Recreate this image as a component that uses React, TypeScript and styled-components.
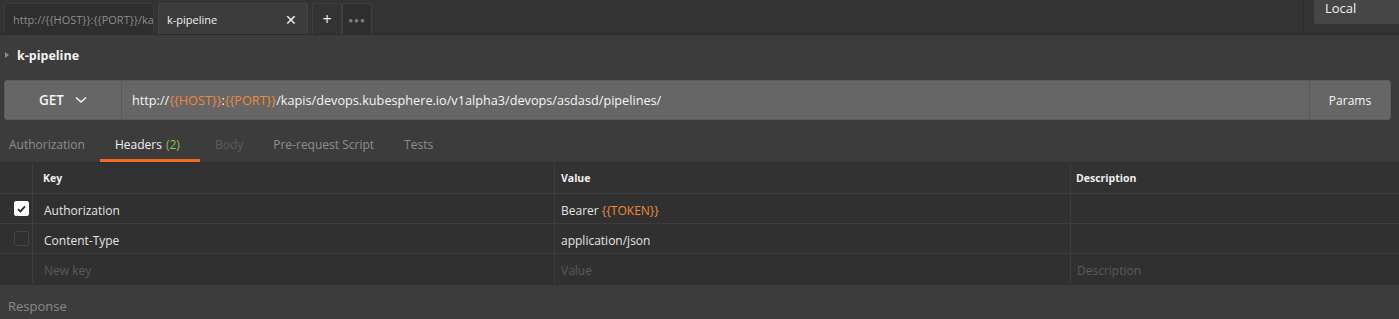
import React from 'react';
import styled, { createGlobalStyle } from 'styled-components';

const GlobalStyle = createGlobalStyle`
  html, body {
    margin: 0;
    padding: 0;
    background: #3c3c3c;
    font-family: 'Open Sans', 'Noto Sans', sans-serif;
    -webkit-font-smoothing: antialiased;
  }
`;

const Page = styled.div`
  width: 1399px;
  height: 319px;
  overflow: hidden;
  background: #3c3c3c;
  color: #e6e6e6;
  font-size: 12px;
`;

// top tabs bar
const TabBar = styled.div`
  display: flex;
  align-items: flex-end;
  height: 34px;
  background: #333333;
  border-bottom: 1px solid #2b2b2b;
  padding-left: 4px;
`;

const ReqTab = styled.div`
  display: flex;
  align-items: center;
  width: 150px;
  height: 31px;
  box-sizing: border-box;
  margin-right: 4px;
  padding: ${({ active }) => (active ? '0 8px' : '0 0 0 8px')};
  border: 1px solid ${({ active }) => (active ? '#444444' : '#3a3a3a')};
  border-bottom: none;
  border-radius: 3px 3px 0 0;
  background: ${({ active }) => (active ? '#3b3b3b' : '#2e2e2e')};
  color: ${({ active }) => (active ? '#f2f2f2' : '#8c8c8c')};
  font-size: 11px;
  white-space: nowrap;
  overflow: hidden;
`;

const TabLabel = styled.span`
  flex: 1;
  min-width: 0;
  overflow: hidden;
`;

const Close = styled.span`
  font-size: 14px;
  color: #eeeeee;
  margin-right: 2px;
`;

const SmallTab = styled.div`
  display: flex;
  align-items: center;
  justify-content: center;
  width: 30px;
  height: 31px;
  box-sizing: border-box;
  border: 1px solid #3f3f3f;
  border-bottom: none;
  border-radius: 3px 3px 0 0;
  background: ${({ dark }) => (dark ? '#2e2e2e' : '#333333')};
  color: ${({ dark }) => (dark ? '#7d7d7d' : '#eeeeee')};
  font-size: ${({ dark }) => (dark ? '8px' : '16px')};
  letter-spacing: ${({ dark }) => (dark ? '1px' : '0')};
`;

const EnvArea = styled.div`
  margin-left: auto;
  align-self: stretch;
  display: flex;
  border-left: 1px solid #2b2b2b;
  padding-left: 10px;
`;

const EnvSelect = styled.div`
  width: 85px;
  height: 24px;
  box-sizing: border-box;
  padding: 0 11px;
  background: #464646;
  border-radius: 0 0 0 3px;
  color: #f0f0f0;
  font-size: 13px;
  line-height: 17px;
`;

const Body = styled.div`
  padding: 0 8px 0 4px;
`;

const TitleRow = styled.div`
  display: flex;
  align-items: center;
  height: 40px;
  font-weight: 700;
  font-size: 12.5px;
  color: #f4f4f4;
`;

const Caret = styled.span`
  width: 0;
  height: 0;
  margin: 0 8px 0 1px;
  border-top: 3.5px solid transparent;
  border-bottom: 3.5px solid transparent;
  border-left: 4px solid #8a8a8a;
`;

const UrlBar = styled.div`
  display: flex;
  height: 40px;
  margin-top: 5px;
  background: #666666;
  border: 1px solid #5c5c5c;
  border-radius: 3px;
  box-sizing: border-box;
  width: 1387px;
`;

const Method = styled.div`
  display: flex;
  align-items: center;
  justify-content: center;
  gap: 11px;
  width: 116px;
  border-right: 1px solid #5a5a5a;
  font-weight: 600;
  font-size: 13.5px;
  color: #f4f4f4;
`;

const UrlText = styled.div`
  flex: 1;
  display: flex;
  align-items: center;
  padding-left: 10px;
  font-size: 12.7px;
  color: #f4f4f4;
  white-space: pre;
`;

const Var = styled.span`
  color: #f0883a;
`;

const ParamsButton = styled.div`
  display: flex;
  align-items: center;
  justify-content: center;
  width: 80px;
  border-left: 1px solid #5a5a5a;
  color: #f4f4f4;
`;

const SubTabs = styled.div`
  display: flex;
  height: 32px;
  margin-top: 10px;
  margin-left: -4px;
`;

const SubTab = styled.div`
  display: flex;
  align-items: center;
  min-width: ${({ active }) => (active ? '100px' : '0')};
  padding: 0 15px 0 ${({ first }) => (first ? 9 : 15)}px;
  box-sizing: border-box;
  border-bottom: 3px solid ${({ active }) => (active ? '#f26b21' : 'transparent')};
  color: ${({ active, muted }) => (active ? '#f2f2f2' : muted ? '#5c5c5c' : '#8d8d8d')};
`;

const Count = styled.span`
  color: #8bc34a;
  margin-left: 4px;
`;

const Table = styled.div`
  margin-left: -4px;
  width: 1399px;
  border-top: 1px solid #2e2e2e;
  border-bottom: 2px solid #2e2e2e;
  background: #303030;
`;

const Row = styled.div`
  display: grid;
  grid-template-columns: 32px 522px 516px 1fr;
  height: ${({ head }) => (head ? 30 : 29)}px;
  border-top: ${({ head }) => (head ? 'none' : '1px solid #3d3d3d')};
  background: ${({ head }) => (head ? '#323232' : '#303030')};
`;

const Cell = styled.div`
  display: flex;
  align-items: center;
  padding-left: ${({ pad }) => pad ?? 7}px;
  padding-top: ${({ head }) => (head ? 0 : 3)}px;
  border-left: ${({ edge }) => (edge ? 'none' : '1px solid #3d3d3d')};
  font-size: ${({ head }) => (head ? '10.5px' : '12px')};
  font-weight: ${({ head }) => (head ? 700 : 400)};
  color: ${({ placeholder, head }) =>
    placeholder ? '#5a5a5a' : head ? '#eeeeee' : '#e4e4e4'};
  white-space: pre;
  overflow: hidden;
`;

const Check = styled.div`
  width: 15px;
  height: 15px;
  box-sizing: border-box;
  margin-left: 14px;
  margin-top: -3px;
  border-radius: 2px;
  display: flex;
  align-items: center;
  justify-content: center;
  background: ${({ checked }) => (checked ? '#ffffff' : 'transparent')};
  border: 1px solid ${({ checked }) => (checked ? '#ffffff' : '#454545')};
`;

const Response = styled.div`
  padding: 12px 0 0 4px;
  color: #8a8a8a;
  font-size: 13px;
`;

const headers = [
  { key: 'Authorization', value: 'Bearer', token: '{{TOKEN}}', on: true },
  { key: 'Content-Type', value: 'application/json', on: false },
];

const Tick = () => (
  <svg width="9" height="8" viewBox="0 0 9 8">
    <path d="M1 4.2 L3.4 6.4 L8 1.4" fill="none" stroke="#2a2a2a" strokeWidth="1.8" />
  </svg>
);

export default function App() {
  return (
    <Page>
      <GlobalStyle />
      <TabBar>
        <ReqTab>
          <TabLabel>http://{'{{HOST}}'}:{'{{PORT}}'}/kapis/devops</TabLabel>
        </ReqTab>
        <ReqTab active>
          <TabLabel>k-pipeline</TabLabel>
          <Close>✕</Close>
        </ReqTab>
        <SmallTab>+</SmallTab>
        <SmallTab dark>●●●</SmallTab>
        <EnvArea>
          <EnvSelect>Local</EnvSelect>
        </EnvArea>
      </TabBar>
      <Body>
        <TitleRow>
          <Caret />
          k-pipeline
        </TitleRow>
        <UrlBar>
          <Method>
            GET
            <svg width="12" height="8" viewBox="0 0 12 8">
              <path d="M1 1.5 L6 6 L11 1.5" fill="none" stroke="#f2f2f2" strokeWidth="1.6" />
            </svg>
          </Method>
          <UrlText>
            http://<Var>{'{{HOST}}'}</Var>:<Var>{'{{PORT}}'}</Var>
            /kapis/devops.kubesphere.io/v1alpha3/devops/asdasd/pipelines/
          </UrlText>
          <ParamsButton>Params</ParamsButton>
        </UrlBar>
        <SubTabs>
          <SubTab first>Authorization</SubTab>
          <SubTab active>
            Headers<Count>(2)</Count>
          </SubTab>
          <SubTab muted>Body</SubTab>
          <SubTab>Pre-request Script</SubTab>
          <SubTab>Tests</SubTab>
        </SubTabs>
        <Table>
          <Row head>
            <Cell edge />
            <Cell head pad={10}>Key</Cell>
            <Cell head pad={6}>Value</Cell>
            <Cell head pad={5}>Description</Cell>
          </Row>
          {headers.map((h) => (
            <Row key={h.key}>
              <Cell edge pad={0}>
                <Check checked={h.on}>{h.on && <Tick />}</Check>
              </Cell>
              <Cell pad={11}>{h.key}</Cell>
              <Cell pad={6}>
                <span>
                  {h.value}
                  {h.token && ' '}
                  {h.token && <Var>{h.token}</Var>}
                </span>
              </Cell>
              <Cell />
            </Row>
          ))}
          <Row>
            <Cell edge />
            <Cell pad={11} placeholder>New key</Cell>
            <Cell pad={6} placeholder>Value</Cell>
            <Cell pad={6} placeholder>Description</Cell>
          </Row>
        </Table>
        <Response>Response</Response>
      </Body>
    </Page>
  );
}
